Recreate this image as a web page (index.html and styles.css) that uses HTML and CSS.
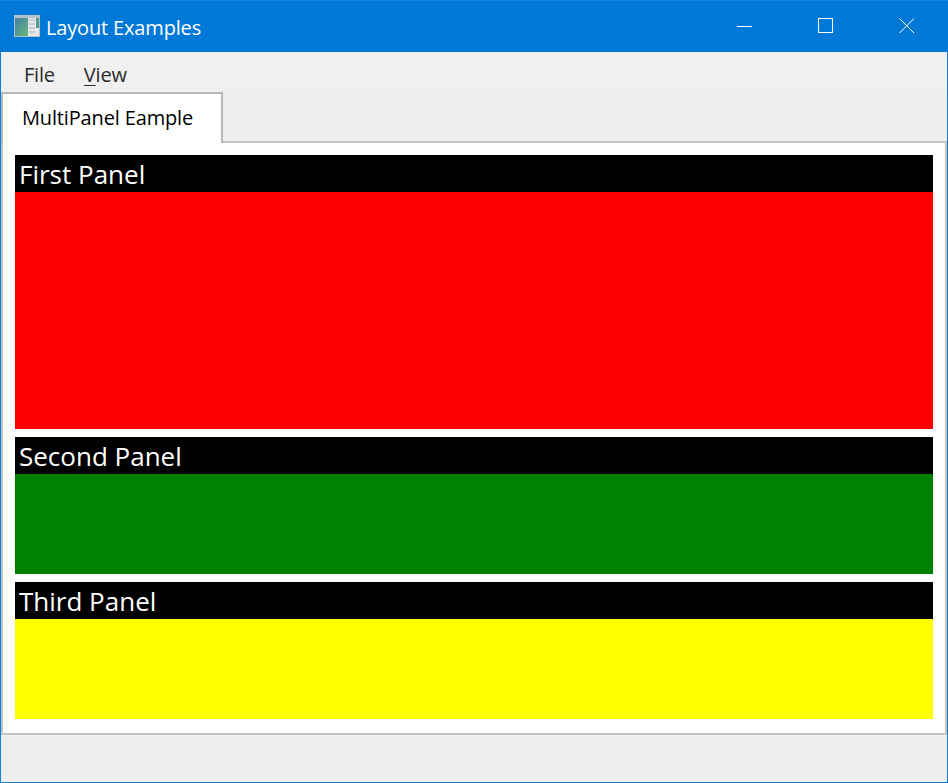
FILE: index.html
```html
<!DOCTYPE html>
<html lang="en">
<head>
<meta charset="utf-8">
<title>Layout Examples</title>
<link rel="stylesheet" href="styles.css">
</head>
<body>
<div class="window">
  <header class="titlebar">
    <svg class="app-icon" width="26" height="22" viewBox="0 0 26 22">
      <defs>
        <linearGradient id="g" x1="0" y1="0" x2="1" y2="1">
          <stop offset="0" stop-color="#4a7fa8"/>
          <stop offset="1" stop-color="#62b878"/>
        </linearGradient>
      </defs>
      <rect x="0" y="0" width="26" height="22" fill="#b4c0ca"/>
      <rect x="1" y="3" width="24" height="18" fill="#e6e8ea"/>
      <rect x="1" y="3" width="13" height="18" fill="url(#g)"/>
      <rect x="15" y="4" width="6" height="2" fill="#c8ccd0"/>
      <rect x="15" y="8" width="6" height="2" fill="#c8ccd0"/>
      <rect x="15" y="12" width="6" height="2" fill="#c8ccd0"/>
      <rect x="15" y="16" width="6" height="2" fill="#c8ccd0"/>
      <rect x="22" y="3" width="3" height="10" fill="#4f9f8f"/>
    </svg>
    <span class="title">Layout Examples</span>
    <div class="controls">
      <span class="ctl"><svg width="16" height="16" viewBox="0 0 16 16"><path d="M0 8.5H15" stroke="#fff" fill="none"/></svg></span>
      <span class="ctl"><svg width="16" height="16" viewBox="0 0 16 16"><rect x="0.5" y="0.5" width="14" height="14" stroke="#fff" fill="none"/></svg></span>
      <span class="ctl"><svg width="16" height="16" viewBox="0 0 16 16"><path d="M0.5 0.5L15 15M15 0.5L0.5 15" stroke="#fff" fill="none"/></svg></span>
    </div>
  </header>
  <nav class="menubar">
    <span class="menu-item">File</span>
    <span class="menu-item"><span class="mnemonic">V</span>iew</span>
  </nav>
  <div class="tabstrip">
    <div class="tab">MultiPanel Eample</div>
  </div>
  <main class="tabpage">
    <section class="panel panel-first">
      <h2 class="panel-head">First Panel</h2>
      <div class="panel-body red"></div>
    </section>
    <section class="panel panel-small">
      <h2 class="panel-head">Second Panel</h2>
      <div class="panel-body green"></div>
    </section>
    <section class="panel panel-small">
      <h2 class="panel-head">Third Panel</h2>
      <div class="panel-body yellow"></div>
    </section>
  </main>
  <footer class="statusbar"></footer>
</div>
</body>
</html>
```

FILE: styles.css
```css
* { box-sizing: border-box; }
html, body { margin: 0; height: 100%; overflow: hidden; }
body { font-family: "Open Sans", "Noto Sans", sans-serif; background: #f0f0f0; }

.window {
  width: 948px;
  height: 783px;
  display: flex;
  flex-direction: column;
  border: 1px solid #0f7fd9;
  border-top: 0;
  background: #f0f0f0;
}

.titlebar {
  height: 52px;
  flex: none;
  margin: 0 -1px;
  background: #0078d7;
  border-top: 1px solid #1a85db;
  color: #fff;
  display: flex;
  align-items: center;
  padding-left: 14px;
}
.app-icon { flex: none; margin-right: 6px; margin-top: -1px; }
.title { font-size: 20px; letter-spacing: -0.16px; margin-top: 2px; }
.controls { margin-left: auto; display: flex; padding-right: 1px; margin-top: -2px; }
.ctl { width: 81px; display: flex; justify-content: center; align-items: center; }

.menubar {
  height: 40px;
  flex: none;
  display: flex;
  align-items: center;
  padding: 4px 0 0 23px;
  gap: 29px;
  font-size: 20px;
  letter-spacing: -0.2px;
  color: #2a2a2a;
}
.mnemonic { text-decoration: underline; text-underline-offset: 3px; text-decoration-thickness: 1px; }

.tabstrip {
  height: 49px;
  flex: none;
  display: flex;
  align-items: flex-start;
  background: #eeeeee;
}
.tab {
  width: 222px;
  height: 51px;
  margin-bottom: -2px;
  position: relative;
  z-index: 1;
  background: #fff;
  border: 2px solid #b8b8b8;
  border-bottom: 0;
  padding-left: 19px;
  font-size: 20px;
  letter-spacing: -0.15px;
  line-height: 47px;
  color: #000;
}

.tabpage {
  height: 594px;
  flex: none;
  background: #fff;
  border: 2px solid #c4c4c4;
  padding: 12px 12px 14px 12px;
  display: flex;
  flex-direction: column;
  gap: 8px;
}

.panel { display: flex; flex-direction: column; flex: none; }
.panel-first { height: 274px; }
.panel-small { height: 137px; }
.panel-head {
  height: 37px;
  flex: none;
  margin: 0;
  background: #000;
  color: #fff;
  font-size: 26px;
  font-weight: 400;
  line-height: 39px;
  padding-left: 4px;
  overflow: hidden;
}
.panel-body { flex: 1; }
.red { background: #ff0000; }
.green { background: #008000; }
.yellow { background: #ffff00; }

.statusbar { flex: 1; background: #eeeeee; border-top: 1px solid #f5f5f5; }
```
